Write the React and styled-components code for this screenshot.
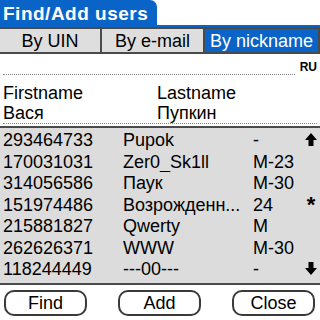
import styled, { createGlobalStyle } from "styled-components"

const GlobalStyle = createGlobalStyle`
    body {
        margin: 0;
        background: #fff;
        font-family: "Liberation Sans", Arial, sans-serif;
    }
`

const Screen = styled.div`
    width: 320px;
    height: 320px;
    display: flex;
    flex-direction: column;
    background: #fff;
    color: #000;
    overflow: hidden;
`
const TitleTab = styled.div`
    width: 157px;
    height: 25px;
    background: #0a64c8;
    border-radius: 0 7px 0 0;
    color: #fff;
    font-weight: 700;
    font-size: 19px;
    letter-spacing: 0.5px;
    line-height: 27px;
    padding-left: 3px;
    box-sizing: border-box;
    white-space: nowrap;
`
const BlueRule = styled.div`
    height: 2px;
    background: #0a64c8;
`
const TabBar = styled.div`
    display: grid;
    grid-template-columns: 100px 101px 113px;
    gap: 2px;
    padding: 2px 2px 2px 0;
    background: #4a4a4a;
`
const Tab = styled.div`
    height: 23px;
    line-height: 24px;
    text-align: center;
    font-size: 18px;
    background: ${p => (p.$active ? "#0a64c8" : "#dedede")};
    color: ${p => (p.$active ? "#fff" : "#000")};
`
const LangRow = styled.div`
    display: flex;
    align-items: flex-end;
    height: 21px;
    padding: 0 3px;
    gap: 5px;
`
const DottedLine = styled.div`
    flex: 1;
    border-bottom: 1px dotted #8a8a8a;
`
const Lang = styled.span`
    font-size: 12px;
    font-weight: 700;
    line-height: 13px;
    margin-bottom: 1px;
`
const NameGrid = styled.div`
    display: grid;
    grid-template-columns: 154px 1fr;
    margin: 8px 3px 2px 3px;
    border-bottom: 1px dotted #8a8a8a;
`
const NameCell = styled.div`
    font-size: 18px;
    line-height: 20px;
    height: 20px;
`
const List = styled.div`
    height: 154px;
    background: #dcdcdc;
    border-top: 2px solid #4a4a4a;
    border-bottom: 2px solid #4a4a4a;
    padding-top: 1px;
    box-sizing: content-box;
`
const Row = styled.div`
    display: grid;
    grid-template-columns: 120px 130px 1fr 18px;
    padding-left: 3px;
    height: 21.5px;
    line-height: 22px;
    font-size: 18px;
`
const Cell = styled.span`
    white-space: nowrap;
    overflow: hidden;
`
const Marker = styled.span`
    display: flex;
    align-items: center;
    justify-content: center;
    font-weight: 700;
    font-size: 22px;
`
const ButtonRow = styled.div`
    display: flex;
    justify-content: space-between;
    padding: 5px 5px 0 4px;
`
const Button = styled.button`
    width: 83px;
    height: 26px;
    border: 2px solid #3a3a3a;
    border-radius: 10px;
    background: #fff;
    font-family: "Liberation Sans", Arial, sans-serif;
    font-size: 18px;
    color: #000;
    padding: 0;
`

const ArrowUp = () => (
    <svg width="12" height="13" viewBox="0 0 12 13">
        <path d="M6 0 L12 7 L8.5 7 L8.5 13 L3.5 13 L3.5 7 L0 7 Z" fill="#000" />
    </svg>
)

const ArrowDown = () => (
    <svg width="12" height="13" viewBox="0 0 12 13">
        <path d="M6 13 L12 6 L8.5 6 L8.5 0 L3.5 0 L3.5 6 L0 6 Z" fill="#000" />
    </svg>
)

const users = [
    { uin: "293464733", nick: "Pupok", age: "-", mark: "up" },
    { uin: "170031031", nick: "Zer0_Sk1ll", age: "M-23" },
    { uin: "314056586", nick: "Паук", age: "M-30" },
    { uin: "151974486", nick: "Возрожденн...", age: "24", mark: "star" },
    { uin: "215881827", nick: "Qwerty", age: "M" },
    { uin: "262626371", nick: "WWW", age: "M-30" },
    { uin: "118244449", nick: "---00---", age: "-", mark: "down" },
]

const App = () => {
    return (
        <Screen>
            <GlobalStyle />
            <TitleTab>Find/Add users</TitleTab>
            <BlueRule />
            <TabBar>
                <Tab>By UIN</Tab>
                <Tab>By e-mail</Tab>
                <Tab $active>By nickname</Tab>
            </TabBar>
            <LangRow>
                <DottedLine />
                <Lang>RU</Lang>
            </LangRow>
            <NameGrid>
                <NameCell>Firstname</NameCell>
                <NameCell>Lastname</NameCell>
                <NameCell>Вася</NameCell>
                <NameCell>Пупкин</NameCell>
            </NameGrid>
            <List>
                {users.map(u => (
                    <Row key={u.uin}>
                        <Cell>{u.uin}</Cell>
                        <Cell>{u.nick}</Cell>
                        <Cell>{u.age}</Cell>
                        <Marker>
                            {u.mark === "up" && <ArrowUp />}
                            {u.mark === "down" && <ArrowDown />}
                            {u.mark === "star" && "*"}
                        </Marker>
                    </Row>
                ))}
            </List>
            <ButtonRow>
                <Button>Find</Button>
                <Button>Add</Button>
                <Button>Close</Button>
            </ButtonRow>
        </Screen>
    )
}

export default App
